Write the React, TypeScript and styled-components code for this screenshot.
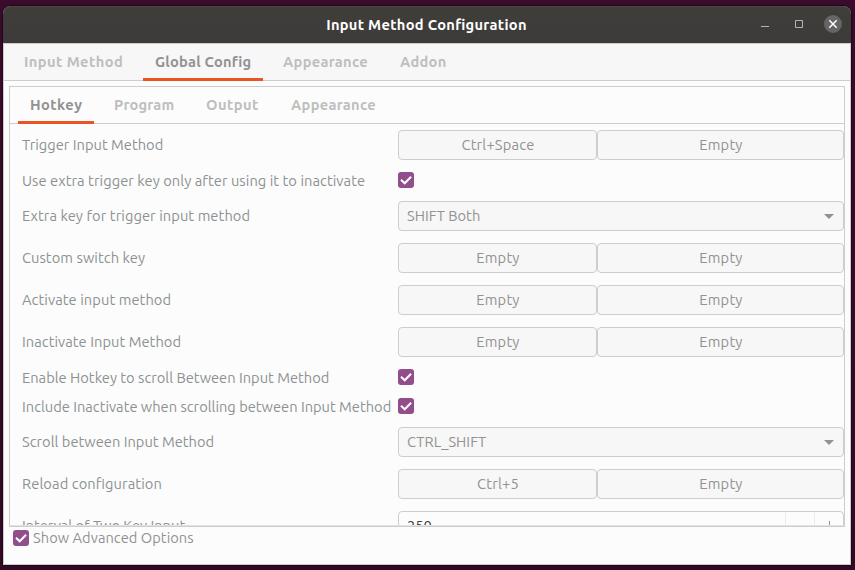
import React from 'react';
import styled, { createGlobalStyle, css } from 'styled-components';

const fontStack = 'Ubuntu, "Noto Sans", sans-serif';

const GlobalStyle = createGlobalStyle`
  * { box-sizing: border-box; }
  html, body { margin: 0; height: 570px; overflow: hidden; }
  body {
    background: #340a27;
    color: #8c9292;
    font: 400 14.67px/17px ${fontStack};
    font-feature-settings: "liga";
  }
`;

const Desktop = styled.div`
  width: 855px;
  height: 570px;
  padding: 6px 4px 5px 3px;
  background: linear-gradient(#3a0b2b, #330a26);
`;

const Window = styled.main`
  display: flex;
  flex-direction: column;
  width: 848px;
  height: 559px;
  border-radius: 8px 8px 0 0;
  box-shadow: 0 0 1px 1px rgba(20, 0, 15, 0.55);
  background: #fcfcfc;
`;

const TitleBar = styled.header`
  display: grid;
  grid-template-columns: 1fr auto 1fr;
  align-items: center;
  height: 37px;
  flex: none;
  padding: 0 9px 0 0;
  border-radius: 8px 8px 0 0;
  background: linear-gradient(#403e3b, #3d3b39);
  box-shadow: inset 0 1px #4a4845;
`;

const Title = styled.h1`
  grid-column: 2;
  margin: 0 0 0 8px;
  color: #fff;
  font-size: 14.67px;
  font-weight: 700;
  line-height: 17px;
  letter-spacing: 0.3px;
`;

const WindowControls = styled.div`
  display: flex;
  justify-content: flex-end;
  align-items: center;
  gap: 16px;
  margin-top: -1px;
`;

const Control = styled.button<{ $round?: boolean }>`
  display: grid;
  place-items: center;
  width: 18px;
  height: 18px;
  padding: 0;
  border: 0;
  border-radius: 50%;
  background: ${(p) => (p.$round ? '#656565' : 'transparent')};
`;

const Body = styled.div`
  display: flex;
  flex-direction: column;
  flex: 1;
  min-height: 0;
  border: 1px solid #cdcdcd;
`;

const TabBar = styled.nav<{ $inner?: boolean }>`
  display: flex;
  flex: none;
  gap: 8px;
  height: 37px;
  border-bottom: 1px solid #cdcdcd;
  padding-left: 8px;
  background: ${(p) => (p.$inner ? '#fcfcfc' : '#f7f7f7')};
`;

const Tab = styled.button<{ $width: number; $active?: boolean; $track: number }>`
  width: ${(p) => p.$width}px;
  height: 37px;
  padding: 0 0 0 12px;
  border: 0;
  border-bottom: 3px solid ${(p) => (p.$active ? '#e95420' : 'transparent')};
  background: none;
  color: ${(p) => (p.$active ? '#929292' : '#bebebe')};
  font: 700 14.67px/17px ${fontStack};
  letter-spacing: ${(p) => p.$track}px;
  text-align: left;
  white-space: nowrap;
`;

const Panel = styled.section`
  display: flex;
  flex-direction: column;
  width: 836px;
  height: 441px;
  margin: 5px 0 0 5px;
  border: 1px solid #cdcdcd;
`;

const Scroller = styled.div`
  flex: 1;
  min-height: 0;
  overflow: hidden;
  padding: 6px 0 0 12px;
  position: relative;

  &::after {
    content: '';
    position: absolute;
    left: 0;
    right: 0;
    bottom: 0;
    height: 1px;
    background: #e2e2e2;
  }
`;

const Form = styled.div`
  display: flex;
  flex-direction: column;
  gap: 12px;
`;

const Row = styled.div`
  display: grid;
  grid-template-columns: 376px 446px;
  align-items: start;
`;

const Label = styled.label<{ $track: number; $inset: number }>`
  padding-top: ${(p) => p.$inset}px;
  letter-spacing: ${(p) => p.$track}px;
  white-space: nowrap;
`;

const ButtonPair = styled.div`
  display: grid;
  grid-template-columns: 199px 247px;
`;

const field = css`
  height: 30px;
  border: 1px solid #cdcdcd;
  border-radius: 4px;
  color: #929292;
  font: 400 14.67px/17px ${fontStack};
`;

const KeyButton = styled.button<{ $track: number }>`
  ${field}
  padding: 0 0 2px 1px;
  background: #f7f7f7;
  letter-spacing: ${(p) => p.$track}px;
  text-align: center;
`;

const SelectBox = styled.div<{ $track: number }>`
  ${field}
  display: flex;
  justify-content: space-between;
  align-items: flex-start;
  padding: 5px 9px 0 8px;
  background: #f7f7f7;
  letter-spacing: ${(p) => p.$track}px;

  svg { margin-top: 7px; }
`;

const SpinBox = styled.div`
  ${field}
  display: grid;
  grid-template-columns: 1fr 29px 29px;
  background: #fcfcfc;
  color: #3d3d3d;
`;

const SpinValue = styled.span`
  padding: 5px 0 0 8px;
`;

const SpinStep = styled.span`
  display: grid;
  place-items: center;
  border-left: 1px solid #ebebeb;
`;

const CheckMark = styled.span`
  display: block;
  width: 16px;
  height: 16px;
  margin-bottom: 1px;
  flex: none;
  border-radius: 3px;
  background: #924d8b;

  svg { display: block; }
`;

const Footer = styled.label`
  display: flex;
  gap: 4px;
  padding: 2px 0 0 9px;
  color: #929292;
  letter-spacing: 0.04px;

  ${CheckMark} { margin-top: 1px; }
`;

const Check = () => (
  <CheckMark>
    <svg width="16" height="16" viewBox="0 0 16 16">
      <path d="M3 7.8 6.7 11.3 13.1 4.8" fill="none" stroke="#fff" strokeWidth="2" />
    </svg>
  </CheckMark>
);

type TabItem = { name: string; width: number; track: number; active?: boolean };

const mainTabs: TabItem[] = [
  { name: 'Input Method', width: 123, track: 0.42 },
  { name: 'Global Config', width: 120, track: 0.2, active: true },
  { name: 'Appearance', width: 109, track: 0.28 },
  { name: 'Addon', width: 70, track: 0.28 },
];

const configTabs: TabItem[] = [
  { name: 'Hotkey', width: 76, track: 0.45, active: true },
  { name: 'Program', width: 84, track: 0.15 },
  { name: 'Output', width: 77, track: 0.44 },
  { name: 'Appearance', width: 109, track: 0.28 },
];

type Option = {
  label: string;
  track: number;
  keys?: [string, string];
  select?: string;
  selectTrack?: number;
  spin?: string;
};

const options: Option[] = [
  { label: 'Trigger Input Method', track: 0.02, keys: ['Ctrl+Space', 'Empty'] },
  { label: 'Use extra trigger key only after using it to inactivate', track: 0.06 },
  { label: 'Extra key for trigger input method', track: 0.08, select: 'SHIFT Both', selectTrack: 0.02 },
  { label: 'Custom switch key', track: 0.08, keys: ['Empty', 'Empty'] },
  { label: 'Activate input method', track: 0.08, keys: ['Empty', 'Empty'] },
  { label: 'Inactivate Input Method', track: 0.05, keys: ['Empty', 'Empty'] },
  { label: 'Enable Hotkey to scroll Between Input Method', track: 0.01 },
  { label: 'Include Inactivate when scrolling between Input Method', track: 0.004 },
  { label: 'Scroll between Input Method', track: 0.02, select: 'CTRL_SHIFT', selectTrack: 0.04 },
  { label: 'Reload configuration', track: 0.1, keys: ['Ctrl+5', 'Empty'] },
  { label: 'Interval of Two Key Input', track: -0.02, spin: '250' },
];

const Tabs = ({ items, inner }: { items: TabItem[]; inner?: boolean }) => (
  <TabBar $inner={inner}>
    {items.map((t) => (
      <Tab key={t.name} $width={t.width} $active={t.active} $track={t.track}>
        {t.name}
      </Tab>
    ))}
  </TabBar>
);

const Field = ({ option }: { option: Option }) => {
  if (option.keys) {
    return (
      <ButtonPair>
        {option.keys.map((k, i) => (
          <KeyButton key={i} $track={0.2}>{k}</KeyButton>
        ))}
      </ButtonPair>
    );
  }
  if (option.select) {
    return (
      <SelectBox $track={option.selectTrack ?? 0}>
        {option.select}
        <svg width="10" height="5" viewBox="0 0 10 5">
          <path d="M0 0H10L5 5Z" fill="#929292" />
        </svg>
      </SelectBox>
    );
  }
  if (option.spin) {
    return (
      <SpinBox>
        <SpinValue>{option.spin}</SpinValue>
        <SpinStep>
          <svg width="10" height="10"><path d="M0 5.5H10" stroke="#929292" /></svg>
        </SpinStep>
        <SpinStep>
          <svg width="10" height="10"><path d="M0 5.5H10M5.5 0V10" stroke="#929292" /></svg>
        </SpinStep>
      </SpinBox>
    );
  }
  return <Check />;
};

export default function App() {
  return (
    <>
      <GlobalStyle />
      <Desktop>
        <Window>
          <TitleBar>
            <Title>Input Method Configuration</Title>
            <WindowControls>
              <Control aria-label="Minimize">
                <svg width="18" height="18"><path d="M5 11.5H13" stroke="#b5b4b2" /></svg>
              </Control>
              <Control aria-label="Maximize">
                <svg width="18" height="18"><path d="M5.5 5.5H12.5V12.5H5.5Z" fill="none" stroke="#b5b4b2" /></svg>
              </Control>
              <Control aria-label="Close" $round>
                <svg width="18" height="18"><path d="M5.3 5.3 12.7 12.7M12.7 5.3 5.3 12.7" stroke="#fff" strokeWidth="1.5" /></svg>
              </Control>
            </WindowControls>
          </TitleBar>
          <Body>
            <Tabs items={mainTabs} />
            <Panel>
              <Tabs items={configTabs} inner />
              <Scroller>
                <Form>
                  {options.map((o) => (
                    <Row key={o.label}>
                      <Label $track={o.track} $inset={o.keys || o.select || o.spin ? 6 : 0}>
                        {o.label}
                      </Label>
                      <Field option={o} />
                    </Row>
                  ))}
                </Form>
              </Scroller>
            </Panel>
            <Footer>
              <Check />
              Show Advanced Options
            </Footer>
          </Body>
        </Window>
      </Desktop>
    </>
  );
}
